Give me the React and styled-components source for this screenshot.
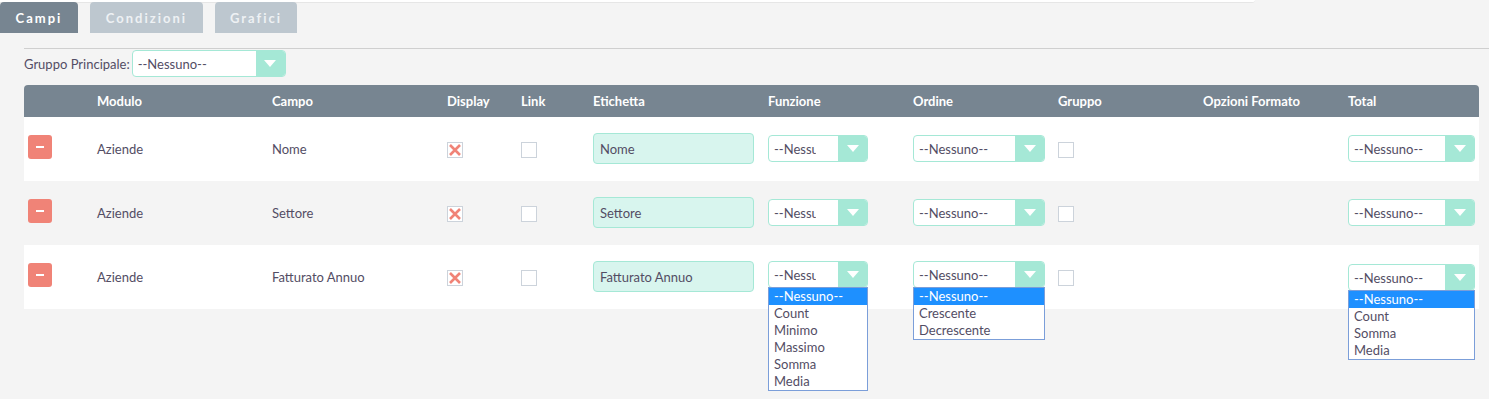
import styled, { createGlobalStyle } from "styled-components";

const GlobalStyle = createGlobalStyle`
  body {
    margin: 0;
    background: #f4f4f4;
    font-family: Lato, "Open Sans", sans-serif;
    color: #534d64;
  }
`;

const Page = styled.div`
  width: 1489px;
  height: 399px;
  overflow: hidden;
`;

const TopEdge = styled.div`
  width: 1255px;
  height: 2px;
  background: #ffffff;
  border-bottom: 1px solid #e6e6e6;
  border-bottom-right-radius: 4px;
`;

const Tabs = styled.div`
  display: flex;
  gap: 12px;
  margin-top: -1px;
`;

const Tab = styled.div`
  height: 31px;
  width: ${(p) => p.$w}px;
  display: flex;
  align-items: center;
  justify-content: center;
  border-radius: 4px 4px 0 0;
  background: ${(p) => (p.$active ? "#778591" : "#bdc7cf")};
  color: ${(p) => (p.$active ? "#ffffff" : "#eef1f4")};
  font-size: 13px;
  font-weight: 700;
  letter-spacing: 2px;
`;

const Content = styled.div`
  margin-left: 24px;
  margin-top: 15px;
  border-top: 1px solid #cfcfcf;
  padding-top: 1px;
`;

const MainGroup = styled.div`
  display: flex;
  align-items: center;
  gap: 2px;
  font-size: 13px;
  height: 27px;
`;

const SelectBox = styled.div`
  position: relative;
  display: flex;
  width: ${(p) => p.$w}px;
  height: 27px;
  box-sizing: border-box;
  border: 1px solid #a5e8d6;
  border-radius: 4px;
  background: #ffffff;
  margin-top: ${(p) => (p.$shift === undefined ? 0 : p.$shift)}px;
`;

const SelectValue = styled.div`
  flex: 1;
  display: flex;
  align-items: center;
  padding-left: 5px;
  font-size: 13px;
  color: #534d64;
  overflow: hidden;
  white-space: nowrap;
`;

const Clip = styled.span`
  display: block;
  overflow: hidden;
  max-width: ${(p) => (p.$clip ? `${p.$clip}px` : "none")};
`;

const Arrow = styled.div`
  width: 29px;
  background: #a5e8d6;
  display: flex;
  align-items: center;
  justify-content: center;
  border-radius: 0 3px 3px 0;
  &::after {
    content: "";
    border-left: 6px solid transparent;
    border-right: 6px solid transparent;
    border-top: 7px solid #ffffff;
  }
`;

const OptionList = styled.div`
  position: absolute;
  left: -1px;
  right: -1px;
  top: 100%;
  background: #ffffff;
  border: 1px solid #7b9ed9;
  z-index: 5;
`;

const Option = styled.div`
  height: 17px;
  line-height: 17px;
  padding-left: 5px;
  font-size: 13px;
  background: ${(p) => (p.$selected ? "#1e90ff" : "transparent")};
  color: ${(p) => (p.$selected ? "#ffffff" : "#534d64")};
`;

const Table = styled.div`
  margin-top: 8px;
  width: 1455px;
`;

const cols = "73px 175px 175px 74px 72px 175px 145px 145px 145px 145px 1fr";

const HeaderRow = styled.div`
  display: grid;
  grid-template-columns: ${cols};
  height: 32px;
  align-items: center;
  background: #778591;
  border-radius: 4px 4px 0 0;
  color: #ffffff;
  font-size: 13px;
  font-weight: 700;
`;

const Row = styled.div`
  display: grid;
  grid-template-columns: ${cols};
  height: 64px;
  align-items: center;
  background: ${(p) => (p.$alt ? "#f4f4f4" : "#ffffff")};
  font-size: 13px;
`;

const Cell = styled.div`
  display: flex;
  align-items: center;
  padding-left: ${(p) => p.$pad || 0}px;
`;

const RemoveButton = styled.button`
  width: 24px;
  height: 24px;
  margin-top: -4px;
  border: none;
  border-radius: 3px;
  background: #f08377;
  display: flex;
  align-items: center;
  justify-content: center;
  padding: 0;
  &::after {
    content: "";
    width: 8px;
    height: 2px;
    background: #ffffff;
  }
`;

const Check = styled.div`
  width: 16px;
  height: 16px;
  box-sizing: border-box;
  border: 1px solid #ccd3db;
  background: #ffffff;
  display: flex;
  align-items: center;
  justify-content: center;
  margin-top: 2px;
`;

const LabelInput = styled.div`
  width: 161px;
  height: 31px;
  box-sizing: border-box;
  border: 1px solid #a5e8d6;
  border-radius: 4px;
  background: #d8f5ee;
  display: flex;
  align-items: center;
  padding-left: 6px;
  font-size: 13px;
  margin-top: -1px;
`;

function Select({ w, clip, options, shift }) {
  return (
    <SelectBox $w={w} $shift={shift}>
      <SelectValue>
        <Clip $clip={clip}>--Nessuno--</Clip>
      </SelectValue>
      <Arrow />
      {options && (
        <OptionList>
          {options.map((o, i) => (
            <Option key={o} $selected={i === 0}>
              {o}
            </Option>
          ))}
        </OptionList>
      )}
    </SelectBox>
  );
}

function Checkbox({ checked }) {
  return (
    <Check>
      {checked && (
        <svg width="14" height="14" viewBox="0 0 14 14">
          <path d="M2 2 L12 12 M12 2 L2 12" stroke="#f08377" strokeWidth="2.6" />
        </svg>
      )}
    </Check>
  );
}

const headers = ["", "Modulo", "Campo", "Display", "Link", "Etichetta", "Funzione", "Ordine", "Gruppo", "Opzioni Formato", "Total"];

const rows = [
  { campo: "Nome" },
  { campo: "Settore" },
  { campo: "Fatturato Annuo", open: true },
];

const funzioni = ["--Nessuno--", "Count", "Minimo", "Massimo", "Somma", "Media"];
const ordini = ["--Nessuno--", "Crescente", "Decrescente"];
const totali = ["--Nessuno--", "Count", "Somma", "Media"];

export default function App() {
  return (
    <Page>
      <GlobalStyle />
      <TopEdge />
      <Tabs>
        <Tab $active $w={78}>Campi</Tab>
        <Tab $w={113}>Condizioni</Tab>
        <Tab $w={82}>Grafici</Tab>
      </Tabs>
      <Content>
        <MainGroup>
          <span>Gruppo Principale:</span>
          <Select w={154} />
        </MainGroup>
        <Table>
          <HeaderRow>
            {headers.map((h, i) => (
              <Cell key={i}>{h}</Cell>
            ))}
          </HeaderRow>
          {rows.map((r, i) => (
            <Row key={r.campo} $alt={i % 2 === 1}>
              <Cell $pad={4}>
                <RemoveButton />
              </Cell>
              <Cell>Aziende</Cell>
              <Cell>{r.campo}</Cell>
              <Cell>
                <Checkbox checked />
              </Cell>
              <Cell>
                <Checkbox />
              </Cell>
              <Cell>
                <LabelInput>{r.campo}</LabelInput>
              </Cell>
              <Cell>
                <Select w={100} clip={42} options={r.open ? funzioni : null} shift={r.open ? -5 : -1} />
              </Cell>
              <Cell>
                <Select w={132} options={r.open ? ordini : null} shift={r.open ? -5 : -1} />
              </Cell>
              <Cell>
                <Checkbox />
              </Cell>
              <Cell />
              <Cell>
                <Select w={127} options={r.open ? totali : null} shift={r.open ? 1 : -1} />
              </Cell>
            </Row>
          ))}
        </Table>
      </Content>
    </Page>
  );
}
